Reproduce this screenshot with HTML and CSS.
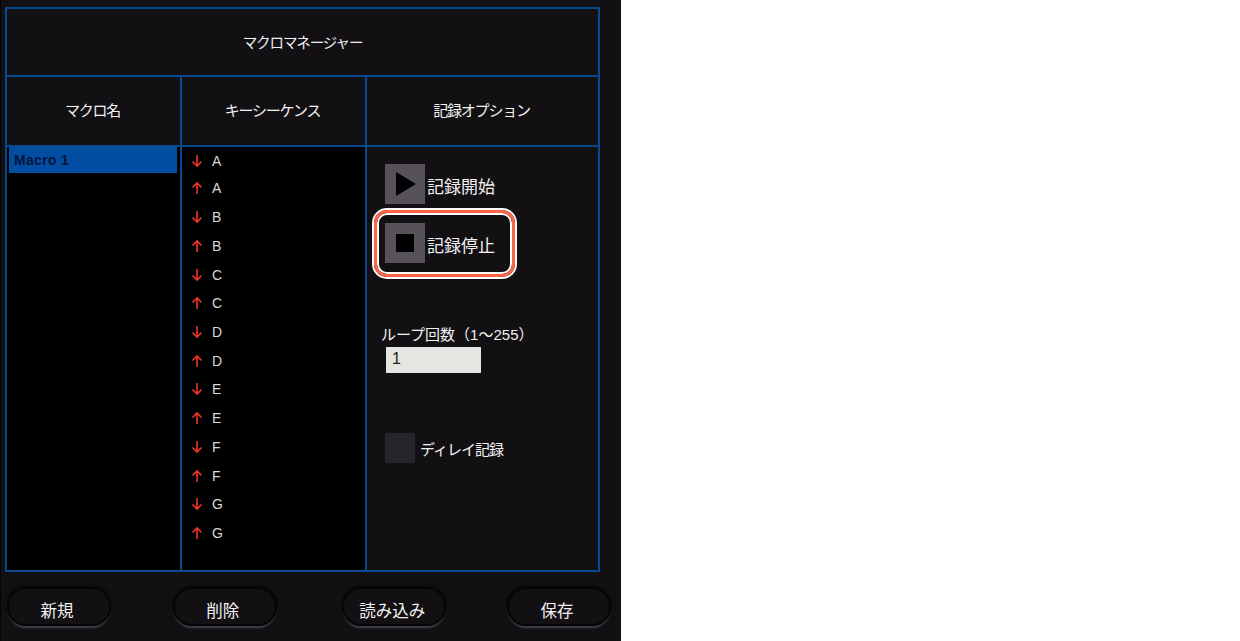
FILE: index.html
```html
<!DOCTYPE html>
<html lang="ja">
  <head>
    <meta charset="UTF-8" />
    <title>マクロマネージャー</title>
    <link rel="stylesheet" href="styles.css">
  </head>
  <body>
    <div class="panel">
      <div class="manager">
        <div class="title">マクロマネージャー</div>
        <div class="head-row">
          <div class="head col-name">マクロ名</div>
          <div class="head col-seq">キーシーケンス</div>
          <div class="head col-opt">記録オプション</div>
        </div>
        <div class="body-row">
          <div class="col-name list">
            <div class="macro-item">Macro 1</div>
          </div>
          <div class="col-seq list">
            <div class="key"><svg class="arrow" viewBox="0 0 12 14"><path d="M6 1V12M1.5 7.5L6 12L10.5 7.5"/></svg>A</div>
            <div class="key"><svg class="arrow" viewBox="0 0 12 14"><path d="M6 13V2M1.5 6.5L6 2L10.5 6.5"/></svg>A</div>
            <div class="key"><svg class="arrow" viewBox="0 0 12 14"><path d="M6 1V12M1.5 7.5L6 12L10.5 7.5"/></svg>B</div>
            <div class="key"><svg class="arrow" viewBox="0 0 12 14"><path d="M6 13V2M1.5 6.5L6 2L10.5 6.5"/></svg>B</div>
            <div class="key"><svg class="arrow" viewBox="0 0 12 14"><path d="M6 1V12M1.5 7.5L6 12L10.5 7.5"/></svg>C</div>
            <div class="key"><svg class="arrow" viewBox="0 0 12 14"><path d="M6 13V2M1.5 6.5L6 2L10.5 6.5"/></svg>C</div>
            <div class="key"><svg class="arrow" viewBox="0 0 12 14"><path d="M6 1V12M1.5 7.5L6 12L10.5 7.5"/></svg>D</div>
            <div class="key"><svg class="arrow" viewBox="0 0 12 14"><path d="M6 13V2M1.5 6.5L6 2L10.5 6.5"/></svg>D</div>
            <div class="key"><svg class="arrow" viewBox="0 0 12 14"><path d="M6 1V12M1.5 7.5L6 12L10.5 7.5"/></svg>E</div>
            <div class="key"><svg class="arrow" viewBox="0 0 12 14"><path d="M6 13V2M1.5 6.5L6 2L10.5 6.5"/></svg>E</div>
            <div class="key"><svg class="arrow" viewBox="0 0 12 14"><path d="M6 1V12M1.5 7.5L6 12L10.5 7.5"/></svg>F</div>
            <div class="key"><svg class="arrow" viewBox="0 0 12 14"><path d="M6 13V2M1.5 6.5L6 2L10.5 6.5"/></svg>F</div>
            <div class="key"><svg class="arrow" viewBox="0 0 12 14"><path d="M6 1V12M1.5 7.5L6 12L10.5 7.5"/></svg>G</div>
            <div class="key"><svg class="arrow" viewBox="0 0 12 14"><path d="M6 13V2M1.5 6.5L6 2L10.5 6.5"/></svg>G</div>
          </div>
          <div class="col-opt options">
            <div class="record-row start">
              <div class="icon-btn"><svg class="icon" viewBox="0 0 40 40"><path d="M11 8L31 20L11 32Z"/></svg></div>
              <span>記録開始</span>
            </div>
            <div class="highlight">
              <div class="record-row">
                <div class="icon-btn"><svg class="icon" viewBox="0 0 40 40"><path d="M11 11H29V29H11Z"/></svg></div>
                <span>記録停止</span>
              </div>
            </div>
            <div class="loop-label">ループ回数（1～255）</div>
            <div class="loop-input">1</div>
            <div class="delay-row">
              <div class="checkbox"></div>
              <span>ディレイ記録</span>
            </div>
          </div>
        </div>
      </div>
      <div class="actions">
        <button class="pill">新規</button>
        <button class="pill">削除</button>
        <button class="pill">読み込み</button>
        <button class="pill">保存</button>
      </div>
    </div>
  </body>
</html>
```

FILE: styles.css
```css
body {
  margin: 0;
  background-color: #fff;
  font-family: "Liberation Sans", "Noto Sans CJK JP", sans-serif;
  color: #f1f1f1;
}

.panel {
  width: 621px;
  height: 641px;
  box-sizing: border-box;
  padding: 7px 0 0 4px;
  border-left: 1px solid #050505;
  background-color: #131014;
  overflow: hidden;
}

.manager {
  width: 595px;
  height: 565px;
  box-sizing: border-box;
  border: 2px solid #09498f;
  display: flex;
  flex-direction: column;
}

.title {
  height: 64px;
  flex: none;
  display: flex;
  align-items: center;
  justify-content: center;
  font-size: 14.5px;
  letter-spacing: -1.1px;
  padding-bottom: 2px;
  border-bottom: 2px solid #09498f;
}

.head-row {
  height: 68px;
  flex: none;
  display: flex;
  border-bottom: 2px solid #09498f;
}

.head {
  display: flex;
  align-items: center;
  justify-content: center;
  font-size: 15px;
  letter-spacing: -1.2px;
  padding: 0 2px 3px 0;
  box-sizing: border-box;
}

.col-name {
  width: 175px;
  flex: none;
  box-sizing: border-box;
  border-right: 2px solid #09498f;
}

.col-seq {
  width: 185px;
  flex: none;
  box-sizing: border-box;
  border-right: 2px solid #09498f;
}

.col-opt {
  flex: 1;
}

.body-row {
  flex: 1;
  display: flex;
  min-height: 0;
}

.list {
  background-color: #000;
}

.macro-item {
  margin: 0 3px 0 2px;
  height: 26px;
  line-height: 26px;
  padding-left: 5px;
  background-color: #034ea2;
  color: #03153f;
  font-size: 14px;
  font-weight: bold;
  letter-spacing: 0.3px;
}

.key {
  height: 28.72px;
  display: flex;
  align-items: center;
  padding-left: 9px;
  font-size: 14px;
  color: #d8d8d8;
}

.key:first-child {
  height: 27px;
}

.arrow {
  width: 12px;
  height: 14px;
  margin-right: 9px;
  fill: none;
  stroke: #f0342a;
  stroke-width: 1.6;
}

.options {
  padding: 17px 0 0 14px;
  font-size: 17px;
}

.record-row {
  display: flex;
  align-items: center;
  gap: 2px;
}

.record-row span {
  padding-top: 2px;
}

.start {
  margin-left: 4px;
}

.icon-btn {
  width: 40px;
  height: 40px;
  background-color: #57525a;
}

.icon {
  display: block;
  width: 40px;
  height: 40px;
  fill: #000;
}

.highlight {
  width: 141px;
  height: 67px;
  box-sizing: border-box;
  margin: 6px 0 0 -7px;
  padding: 10px 0 0 8px;
  border: 3px solid #ff6446;
  border-radius: 13px;
  box-shadow: 0 0 0 2px #fff, inset 0 0 0 2px #fff;
}

.loop-label {
  margin: 48px 0 0 0;
  font-size: 15px;
  white-space: nowrap;
  line-height: 20px;
}

.loop-input {
  width: 95px;
  height: 26px;
  line-height: 24px;
  margin: 2px 0 0 5px;
  padding-left: 6px;
  box-sizing: border-box;
  background-color: #e6e5e1;
  color: #222;
  font-size: 16px;
}

.delay-row {
  display: flex;
  align-items: center;
  gap: 5px;
  margin: 60px 0 0 4px;
  font-size: 15px;
  letter-spacing: -1px;
}

.checkbox {
  width: 30px;
  height: 30px;
  background-color: #262329;
}

.actions {
  display: flex;
  justify-content: space-between;
  width: 604px;
  margin: 15px 0 0 2px;
}

.pill {
  width: 104px;
  height: 39px;
  padding: 6px 4px 0 0;
  border: 2px solid #060507;
  border-radius: 19px;
  background-color: #131014;
  color: #f1f1f1;
  font-family: inherit;
  font-size: 16.5px;
  box-shadow: 0 -1px 3px #060507, 0 3px 2px -1px #4a474d;
}

.pill:nth-child(2) {
  margin: 0 1px 0 -1px;
}

.pill:nth-child(3) {
  margin: 0 -2px 0 2px;
}
```
